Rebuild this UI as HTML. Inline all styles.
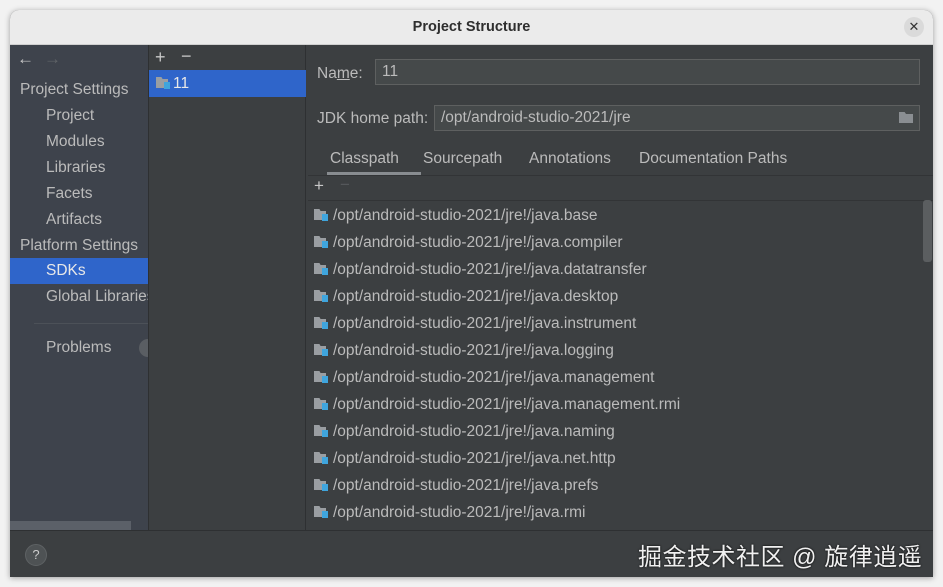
<!DOCTYPE html><html><head><style>
*{margin:0;padding:0;box-sizing:border-box}
body{width:943px;height:587px;background:#f2f2f2;font-family:"Liberation Sans","Noto Sans CJK SC",sans-serif;position:relative;overflow:hidden;color:#bbbbbb;font-size:15.5px}
.win{position:absolute;left:10px;top:10px;width:923px;height:567px;border-radius:9px 9px 0 0;overflow:hidden;background:#3c3f41;box-shadow:0 1px 6px rgba(0,0,0,.35)}
.title{position:absolute;left:0;top:0;width:923px;height:35px;background:#ebebeb;border-bottom:1px solid #d0d0d0;text-align:center;line-height:34px;color:#2e2e2e;font-weight:bold;font-size:14.5px}
.close{position:absolute;right:9px;top:7px;width:20px;height:20px;border-radius:50%;background:#dadada;color:#333;font-size:13px;line-height:20px;text-align:center;font-weight:normal}
.abs{position:absolute;white-space:nowrap}
.left{position:absolute;left:0;top:35px;width:138px;height:485px;background:#3e434c}
.mid{position:absolute;left:138px;top:35px;width:158px;height:485px;background:#3c3f41;border-left:1px solid #2e3032;border-right:1px solid #2e3032}
.bottom{position:absolute;left:0;top:520px;width:923px;height:47px;background:#3c3f41;border-top:1px solid #2e3032}
.inp{position:absolute;border:1px solid #5e6060;background:#45494a;color:#bbb;padding-left:6px}
.row{position:absolute;left:304px;height:27px;line-height:27px;color:#bbb}
.ic{display:inline-block;width:15px;height:12px;position:relative;vertical-align:-1px;margin-right:4px}
.ic:before{content:"";position:absolute;left:0;top:0;width:12px;height:11px;background:#9a9ea2;clip-path:polygon(0 0,45% 0,55% 18%,100% 18%,100% 100%,0 100%)}
.ic:after{content:"";position:absolute;left:8px;top:5px;width:6px;height:7px;background:#3fa5dd}
</style></head><body>
<div class="win">
<div class="title">Project Structure<div class="close">✕</div></div>
<div class="left">
<div class="abs" style="left:7px;top:4px;font-size:17px;color:#c8c8c8">←</div>
<div class="abs" style="left:34px;top:4px;font-size:17px;color:#606468">→</div>
<div class="abs" style="left:10px;top:36px">Project Settings</div>
<div class="abs" style="left:36px;top:62px">Project</div>
<div class="abs" style="left:36px;top:88px">Modules</div>
<div class="abs" style="left:36px;top:114px">Libraries</div>
<div class="abs" style="left:36px;top:140px">Facets</div>
<div class="abs" style="left:36px;top:166px">Artifacts</div>
<div class="abs" style="left:10px;top:192px">Platform Settings</div>
<div class="abs" style="left:0;top:213px;width:138px;height:26px;background:#2f65ca"></div>
<div class="abs" style="left:36px;top:217px;color:#e8e8e8">SDKs</div>
<div class="abs" style="left:36px;top:243px;width:102px;overflow:hidden">Global Libraries</div>
<div class="abs" style="left:24px;top:278px;width:114px;height:1px;background:#4c5158"></div>
<div class="abs" style="left:36px;top:294px">Problems</div>
<div class="abs" style="left:129px;top:294px;width:18px;height:18px;border-radius:50%;background:#5a5e63"></div>
<div class="abs" style="left:0;top:476px;width:121px;height:9px;background:#5b6068"></div>
</div>
<div class="mid">
<div class="abs" style="left:6px;top:2px;font-size:18px;color:#c8c8c8">+</div>
<div class="abs" style="left:32px;top:1px;font-size:18px;color:#c8c8c8">−</div>
<div class="abs" style="left:0;top:25px;width:157px;height:27px;background:#2f65ca"></div>
<div class="abs" style="left:7px;top:30px;color:#e8e8e8"><span class="ic" style="margin-right:2px"></span>11</div>
</div>
<div class="abs" style="left:307px;top:55px">Na<u>m</u>e:</div>
<div class="inp" style="left:365px;top:49px;width:545px;height:26px;line-height:24px">11</div>
<div class="abs" style="left:307px;top:100px">JDK home path:</div>
<div class="inp" style="left:424px;top:95px;width:486px;height:26px;line-height:24px">/opt/android-studio-2021/jre<span style="position:absolute;right:6px;top:6px;width:14px;height:11px;background:#8a8e92;clip-path:polygon(0 0,40% 0,50% 18%,100% 18%,100% 100%,0 100%)"></span></div>
<div class="abs" style="left:320px;top:140px">Classpath</div>
<div class="abs" style="left:317px;top:162px;width:94px;height:3px;background:#888c90"></div>
<div class="abs" style="left:413px;top:140px">Sourcepath</div>
<div class="abs" style="left:519px;top:140px">Annotations</div>
<div class="abs" style="left:629px;top:140px">Documentation Paths</div>
<div class="abs" style="left:298px;top:165px;width:625px;height:1px;background:#323436"></div>
<div class="abs" style="left:304px;top:166px;font-size:17px;color:#c8c8c8">+</div>
<div class="abs" style="left:330px;top:165px;font-size:17px;color:#55585a">−</div>
<div class="abs" style="left:298px;top:190px;width:625px;height:1px;background:#323436"></div>
<div class="abs" style="left:913px;top:190px;width:9px;height:62px;background:#5b5e60;border-radius:3px"></div>
<div class="row" style="top:192px"><span class="ic"></span>/opt/android-studio-2021/jre!/java.base</div>
<div class="row" style="top:219px"><span class="ic"></span>/opt/android-studio-2021/jre!/java.compiler</div>
<div class="row" style="top:246px"><span class="ic"></span>/opt/android-studio-2021/jre!/java.datatransfer</div>
<div class="row" style="top:273px"><span class="ic"></span>/opt/android-studio-2021/jre!/java.desktop</div>
<div class="row" style="top:300px"><span class="ic"></span>/opt/android-studio-2021/jre!/java.instrument</div>
<div class="row" style="top:327px"><span class="ic"></span>/opt/android-studio-2021/jre!/java.logging</div>
<div class="row" style="top:354px"><span class="ic"></span>/opt/android-studio-2021/jre!/java.management</div>
<div class="row" style="top:381px"><span class="ic"></span>/opt/android-studio-2021/jre!/java.management.rmi</div>
<div class="row" style="top:408px"><span class="ic"></span>/opt/android-studio-2021/jre!/java.naming</div>
<div class="row" style="top:435px"><span class="ic"></span>/opt/android-studio-2021/jre!/java.net.http</div>
<div class="row" style="top:462px"><span class="ic"></span>/opt/android-studio-2021/jre!/java.prefs</div>
<div class="row" style="top:489px"><span class="ic"></span>/opt/android-studio-2021/jre!/java.rmi</div>
<div class="bottom">
<div class="abs" style="left:15px;top:13px;width:22px;height:22px;border-radius:50%;background:#4e5254;border:1px solid #5e6264;text-align:center;line-height:20px;font-size:13px;color:#ccc">?</div>
<div class="abs" style="left:628px;top:6px;font-size:24px;letter-spacing:0.5px;color:#f0f0f0;text-shadow:0 0 2px #000">掘金技术社区 @ 旋律逍遥</div>
</div>
</div>
</body></html>
